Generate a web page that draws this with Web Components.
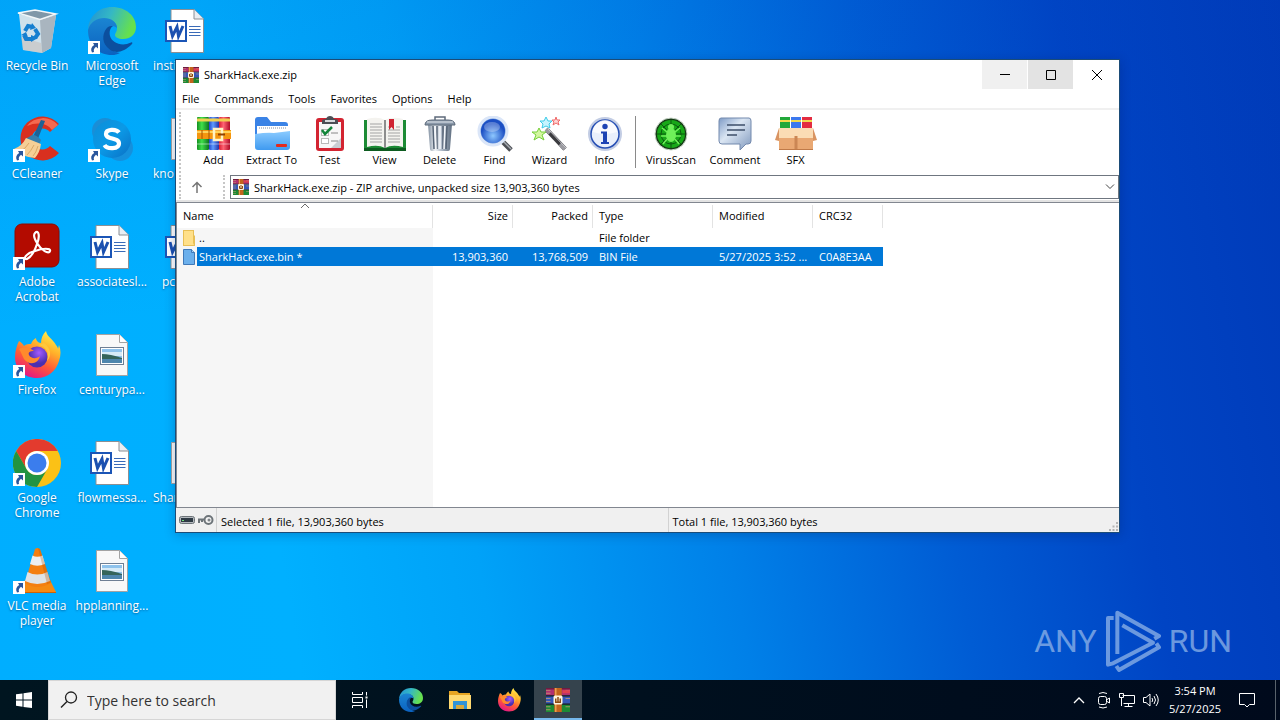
<!DOCTYPE html>
<html lang="en">
<head>
<meta charset="utf-8">
<title>Desktop</title>
<meta name="viewport" content="width=device-width, initial-scale=1">
<style>
html, body { margin: 0; height: 100%; }
body { font-family: "Open Sans", "Noto Sans", sans-serif; font-size: 11px; line-height: 15px; color: #000; overflow: hidden; }
</style>
</head>
<body>
<desktop-shell>
  <desktop-item icon="recycle">Recycle Bin</desktop-item>
  <desktop-item icon="ccleaner" shortcut>CCleaner</desktop-item>
  <desktop-item icon="acrobat" shortcut>Adobe Acrobat</desktop-item>
  <desktop-item icon="firefox" shortcut>Firefox</desktop-item>
  <desktop-item icon="chrome" shortcut>Google Chrome</desktop-item>
  <desktop-item icon="vlc" shortcut>VLC media player</desktop-item>
  <desktop-item icon="edge" shortcut>Microsoft Edge</desktop-item>
  <desktop-item icon="skype" shortcut>Skype</desktop-item>
  <desktop-item icon="word">associatesl...</desktop-item>
  <desktop-item icon="picture">centurypa...</desktop-item>
  <desktop-item icon="word">flowmessa...</desktop-item>
  <desktop-item icon="picture">hpplanning...</desktop-item>
  <desktop-item icon="word" clipped>insti</desktop-item>
  <desktop-item icon="file" clipped>kno</desktop-item>
  <desktop-item icon="word" clipped="short">pc</desktop-item>
  <desktop-item icon="file" clipped style="grid-row:5">Shar</desktop-item>

  <archive-window slot="window" heading="SharkHack.exe.zip">
    <menu-bar slot="menu"></menu-bar>
    <tool-bar slot="tools">
      <tool-button icon="add">Add</tool-button>
      <tool-button icon="extract" style="--w:61px">Extract To</tool-button>
      <tool-button icon="test">Test</tool-button>
      <tool-button icon="view">View</tool-button>
      <tool-button icon="delete">Delete</tool-button>
      <tool-button icon="find">Find</tool-button>
      <tool-button icon="wizard">Wizard</tool-button>
      <tool-button icon="info">Info</tool-button>
      <tool-separator></tool-separator>
      <tool-button icon="virus" style="--w:62px">VirusScan</tool-button>
      <tool-button icon="comment" style="--w:66px">Comment</tool-button>
      <tool-button icon="sfx">SFX</tool-button>
    </tool-bar>
    <address-bar slot="address"></address-bar>
    <file-list slot="files"></file-list>
    <status-bar slot="status"></status-bar>
  </archive-window>
  <water-mark slot="mark"></water-mark>
  <task-bar slot="taskbar"></task-bar>
</desktop-shell>

<script>
const PAGE = 'M8 2.5H31L40.5 12V45.5H8Z';
const BOOKS = `<rect x="0" y="0" width="16" height="5" fill="#b03070"/><rect y="5.500" width="16" height="5" fill="#3558b8"/><rect y="11" width="16" height="5" fill="#1c8a34"/>
<path d="M0 1.500H3M0 3.500H3M13 1.500H16M0 7H3M13 7H16M0 9H3M0 12.500H3M13 12.500H16M0 14.500H3" stroke="#c9a070" stroke-width=".5"/>
<path d="M0 5.200H16M0 10.700H16" stroke="#16202e" stroke-width=".8"/><path d="M0 .5H16" stroke="#6e1c40"/><path d="M11 2.500H16" stroke="#e04050" stroke-width="2"/>
<rect x="5.500" width="5" height="16" fill="#c4641c"/><path d="M6.500 0V16" stroke="#eba052"/><rect x="5" y="5" width="6" height="6" rx="1" fill="#fff4dc"/><path d="M6.500 7V9.500H9.500V7M8 6V9" stroke="#8c4a10" fill="none"/>`;
const EDGE = `<defs><linearGradient id="e1" x1="0" y1="0" x2="1" y2=".3"><stop offset="0" stop-color="#1f8fd6"/><stop offset=".5" stop-color="#35b8c4"/><stop offset="1" stop-color="#66e04e"/></linearGradient>
<linearGradient id="e2" x1="0" y1="0" x2="0" y2="1"><stop offset="0" stop-color="#1b85d2"/><stop offset="1" stop-color="#0b62c0"/></linearGradient></defs>
<path d="M0 22C1 9 11 0 24 0C38 0 48 9 48 20C48 28 42 32 35 32C30 32 27 30 27 28C27 26 29 25 29 21C29 15 23 12 16 12C9 12 3 16 0 22Z" fill="url(#e1)"/>
<path d="M0 23C2 15 9 11 16 11C23 11 29 15 29 21C25 17 17 20 17 29C17 38 24 45 32 46C29 47.500 27 48 24 48C10 48 0 38 0 23Z" fill="url(#e2)"/>
<path d="M20 20C15 24 13 34 19 40C25 47 34 47 44 37C45 36 44 35 43 35.500C34 40 24 36 22 29C21 25 22 21 25 19C23 18.800 21.500 19 20 20Z" fill="#0c4f9e"/>`;
const FOX = `<defs><linearGradient id="f1" x1=".8" y1="0" x2=".3" y2="1"><stop offset="0" stop-color="#fff44f"/><stop offset=".35" stop-color="#ffb12a"/><stop offset=".65" stop-color="#ff5a36"/><stop offset="1" stop-color="#e31587"/></linearGradient>
<radialGradient id="f2" cx=".6" cy=".3"><stop offset="0" stop-color="#a45cff"/><stop offset="1" stop-color="#4a2fb0"/></radialGradient></defs>
<path d="M6 10C8 11 10 13 11 15C13 13 16 13 18 13C19 10 21 8 23 7C23 9 25 12 28 12C28 7 30 3 33 0C34 6 40 8 43 14C44 15 45 17 45 18L46 14C48 19 48 24 46 30C43 40 35 47 24 47C11 47 2 38 2 26C2 20 4 14 6 10Z" fill="url(#f1)"/>
<circle cx="24" cy="26" r="10.500" fill="url(#f2)"/><path d="M6 18C12 15 17 17 21 20C17 20 15 21 16 24C18 28 24 28 27 25C25 34 15 34 11 28C9 24 8 21 6 18Z" fill="#ff8a2c"/>
<path d="M25 14C33 15 37 22 34 30C39 25 38 17 31 12Z" fill="#ffc83c"/>`;
const ICONS = {
recycle: ['0 0 48 48', `<path d="M6 7L10 43L29 46L38 41L43 8L27 12Z" fill="#dfe5ea" fill-opacity=".93"/><path d="M27 13L29 46L38 41L43 8Z" fill="#a9b5bf"/><path d="M5 6L22 3L43 7L27 12.500Z" fill="#7f97a8" stroke="#f2f6f8" stroke-width="1.500"/><path d="M8 30L10 43L29 46L28 36Z" fill="#c4b6ae" opacity=".45"/>
<g fill="none" stroke="#157fd0" stroke-width="4"><path d="M12 24L15 19L20 20"/><path d="M22 22L25 27L22 31"/><path d="M18 32H13L11 28"/></g><path d="M19 16L23 21L17 23ZM25 31L18 35V28ZM8 28L13 25L15 30Z" fill="#157fd0"/>`],
ccleaner: ['0 0 48 48', `<path d="M46 9A22 22 0 1 0 46 38L37 31A10.500 10.500 0 1 1 37 17Z" fill="#d9301f"/><path d="M45 10A20 20 0 0 0 14 11C25 6 35 9 39 15Z" fill="#f46a50"/><path d="M28 5L32 6L24 26L19 24Z" fill="#1d6296"/><path d="M16 22Q21 17 28 25L26 30L12 24Z" fill="#347fae"/><path d="M13 23L28 29Q27 37 22 43Q8 42 1 34Q9 31 13 23Z" fill="#f6cf96"/><path d="M16 28Q12 34 8 36M21 30Q18 36 14 40M25 31Q23 38 20 41" stroke="#dba865" fill="none"/>`],
acrobat: ['0 0 48 48', `<rect x="2" y="1" width="44" height="43" rx="7" fill="#b30b00" stroke="#8e0900"/><path d="M22 10C26 6 27 14 24 21C22 27 18 34 14 36C9 37 13 30 22 28C30 25 38 25 37 28C36 32 28 27 24 20C21 15 20 12 22 10Z" fill="none" stroke="#fff" stroke-width="2.200"/>`],
firefox: ['0 0 48 48', FOX],
edge: ['0 0 48 48', EDGE],
chrome: ['0 0 48 48', `<circle cx="24" cy="24" r="24" fill="#fbc116"/><path d="M3.200 12A24 24 0 0 1 44.800 12H24A12 12 0 0 0 13.600 30Z" fill="#e33b2e"/><path d="M3.200 12A24 24 0 0 0 24 48L34.400 30A12 12 0 0 1 13.600 30Z" fill="#229342"/><circle cx="24" cy="24" r="12" fill="#fff"/><circle cx="24" cy="24" r="9.500" fill="#3b7ded"/>`],
vlc: ['0 0 48 48', `<path d="M12 33H37L43 45H6Z" fill="#f58a12"/><path d="M6 45H43V46H6Z" fill="#cf6203"/><path d="M22 2Q24.500 0 27 2L38 36Q24 44 12 36Z" fill="#f47f10"/><path d="M19.500 8.500Q24 11 29.500 8.500L32 17Q24 20.500 17 17Z" fill="#eceff1"/><path d="M14.500 25Q24 30 34.500 25L37 34Q24 40 12 34Z" fill="#dfe3e6"/><path d="M25 1L34 37Q38 36 38 35L27 2Z" fill="#b45208" opacity=".3"/>`],
skype: ['0 0 48 48', `<defs><linearGradient id="s" x1="0" y1="0" x2="1" y2="1"><stop offset="0" stop-color="#0d8ed8"/><stop offset=".5" stop-color="#0b99e6"/><stop offset="1" stop-color="#0a6fc4"/></linearGradient></defs><circle cx="17" cy="16" r="13" fill="#1a8ed6"/><circle cx="32" cy="33" r="13" fill="#1590dc"/><circle cx="24" cy="24" r="19" fill="url(#s)"/><path d="M31 17.500C28 13.500 18 14 18 19C18 25 31 22 31 28.500C31 34.500 19 34.500 16.500 30" fill="none" stroke="#fff" stroke-width="4.200"/>`],
word: ['0 0 48 48', `<path d="${PAGE}" fill="#fff" stroke="#8b8f94"/><path d="M31 2.500V12H40.500" fill="#e9edf2" stroke="#8b8f94"/><path d="M26 19.500H37.500M26 22.500H37.500M26 25.500H37.500M26 28.500H37.500" stroke="#3a6bb8"/><rect x="3" y="14" width="20" height="20" fill="#fff" stroke="#1b55b6" stroke-width="2"/><path d="M7 19L9.500 29L14 20L15.500 29L20 19" fill="none" stroke="#1b50b0" stroke-width="3"/>`],
picture: ['0 0 48 48', `<path d="M8.500 3.500H31.500L39.500 11.500V44.500H8.500Z" fill="#f8f8f8" stroke="#a3a3a3"/><path d="M31.500 3.500V11.500H39.500" fill="#fff" stroke="#a3a3a3"/><rect x="12.500" y="16.500" width="23" height="17" fill="#fff" stroke="#6f7f94"/><rect x="14" y="18" width="20" height="14" fill="#8fc3ec"/><path d="M14 21H34V25H14Z" fill="#d7ebf7"/><path d="M14 23Q22 23 34 27V28H14Z" fill="#35645a"/><path d="M14 28H34V32H14Z" fill="#4e86ad"/>`],
file: ['0 0 48 48', `<path d="M8.500 3.500H31.500L39.500 11.500V44.500H8.500Z" fill="#f8f8f8" stroke="#a3a3a3"/>`],
add: ['0 0 44 36', `<defs><linearGradient id="g" x1="0" x2="1"><stop offset="0" stop-color="#148f22"/><stop offset=".4" stop-color="#3fe04a"/><stop offset="1" stop-color="#0c7320"/></linearGradient><linearGradient id="b" x1="0" x2="1"><stop offset="0" stop-color="#2445c8"/><stop offset=".4" stop-color="#5f9cff"/><stop offset="1" stop-color="#2232a8"/></linearGradient><linearGradient id="r" x1="0" x2="1"><stop offset="0" stop-color="#d81c30"/><stop offset=".4" stop-color="#ff6474"/><stop offset="1" stop-color="#b00d28"/></linearGradient></defs>
<rect x="5" y="1" width="12" height="33" rx="1" fill="url(#g)"/><rect x="17" y="1" width="10" height="33" rx="1" fill="url(#b)"/><rect x="27" y="1" width="11" height="33" rx="1" fill="url(#r)"/><path d="M5 4H17M17 4H27M27 4H38" stroke="#f0d050" stroke-width="3"/><path d="M5 28H38" stroke="#fff" stroke-opacity=".5"/><rect x="5" y="14" width="34" height="9" fill="#f5960f"/><path d="M5 16H39" stroke="#ffd35a" stroke-width="2"/><path d="M10 14V23M17 14V23" stroke="#a85303"/><rect x="22" y="13" width="8" height="11" fill="none" stroke="#fff3c4" stroke-width="2.500"/><path d="M26 18.500H33" stroke="#8f4204" stroke-width="2"/>`],
extract: ['0 0 44 36', `<defs><linearGradient id="x" x1="0" y1="0" x2="0" y2="1"><stop offset="0" stop-color="#8bcbff"/><stop offset="1" stop-color="#3f9af0"/></linearGradient></defs><path d="M5 4Q5 1 8 1H17L21 6H35Q38 6 38 9V30H5Z" fill="#3a83e6"/><path d="M7 10H38V20H7Z" fill="#fff"/><path d="M9 12H37" stroke="#7f8fa5" stroke-dasharray="1 1"/><path d="M5 18Q18 16 24 17L40 15V31Q40 34 37 34H8Q5 34 5 31Z" fill="url(#x)"/><rect x="26" y="28" width="11" height="3" rx="1" fill="#e32a1e"/>`],
test: ['0 0 44 36', `<rect x="8" y="2" width="28" height="33" rx="3" fill="#d32431"/><path d="M11 6H33V32H11Z" fill="#f7f7f7"/><path d="M33 22V32H23Z" fill="#c9cdd2"/><path d="M14 5Q14 3 18 3Q19 0 22 0Q25 0 26 3Q30 3 30 5V8H14Z" fill="#4b4f55"/><path d="M17 5H27" stroke="#d6d9dc" stroke-width="2"/><rect x="13.500" y="13.500" width="7" height="6" fill="#fff" stroke="#b8b8b8"/><path d="M14 14L17 18L24 11" fill="none" stroke="#13853a" stroke-width="2.500"/><rect x="13.500" y="22.500" width="7" height="5" fill="#fff" stroke="#b8b8b8"/><path d="M23 17H30M23 25H30" stroke="#888"/>`],
view: ['0 0 44 36', `<path d="M1 4H43V34H1Z" fill="#1c8a34"/><path d="M1 32H43V35H1Z" fill="#0d5c20"/><path d="M4 3Q15 0 22 4Q29 0 40 3V31Q29 28 22 32Q15 28 4 31Z" fill="#f4f3ef"/><path d="M22 4V32" stroke="#8d8d8d" stroke-width="2"/><path d="M7 8H19M7 11H19M7 14H19M7 17H19M7 20H19M7 23H19M7 26H19M25 14H37M25 17H37M25 20H37M25 23H37M25 26H37M33 11H37M25 11H26" stroke="#a3a3a3"/><path d="M26 3H31V14L28.500 11L26 14Z" fill="#cf2231"/>`],
delete: ['0 0 44 36', `<defs><linearGradient id="d" x1="0" x2="1"><stop offset="0" stop-color="#7f8e9f"/><stop offset=".3" stop-color="#f2f5f8"/><stop offset=".6" stop-color="#a8b4c2"/><stop offset="1" stop-color="#5f6e80"/></linearGradient></defs><path d="M10 8H34L32 33Q32 35 30 35H14Q12 35 12 33Z" fill="url(#d)"/><path d="M15 10L16 33M19 10V33M25 10V33M29 10L28 33" stroke="#556375" stroke-width="1.500"/><path d="M17 10L18 33M22 10V33M27 10L26 33" stroke="#f3f6fa" stroke-width="1.500"/><path d="M7 9Q7 4 14 4H30Q37 4 37 9Z" fill="#8b99aa" stroke="#5d6a7a"/><path d="M17 4V1H27V4" fill="none" stroke="#5d6a7a" stroke-width="1.500"/><path d="M9 6H35" stroke="#e3e9ef"/>`],
find: ['0 0 44 36', `<defs><radialGradient id="q" cx=".5" cy=".7"><stop offset="0" stop-color="#8ec8ff"/><stop offset="1" stop-color="#1c4fc4"/></radialGradient></defs><path d="M28 24L38 34" stroke="#4c4f55" stroke-width="5"/><path d="M28 23L38 33" stroke="#a6abb2" stroke-width="1.500"/><circle cx="20" cy="15" r="14" fill="#6f9be0" stroke="#dbe6f8" stroke-width="3"/><circle cx="20" cy="15" r="12" fill="url(#q)"/><ellipse cx="19" cy="11" rx="8" ry="5" fill="#fff" opacity=".28"/>`],
wizard: ['0 0 44 36', `<path d="M19 14L37 33" stroke="#3b3b3f" stroke-width="4.500"/><path d="M18 13L22 17M32 28L37 33" stroke="#9b9ba1" stroke-width="4"/><path d="M20 13L38 32" stroke="#c9c9ce"/><path d="M18 1L20 5L24 5L21 8L22 12L18 10L14 12L15 8L12 5L16 5Z" fill="#c6f4ff" stroke="#3ccbe8"/><path d="M11 12L13 16L18 16L14 19L16 24L11 21L6 24L8 19L4 16L9 16Z" fill="#d3f7a0" stroke="#76cf3a"/><path d="M28 1L29 4H32L30 6L31 9L28 7L25 9L26 6L24 4H27Z" fill="#ffd6d6" stroke="#ef6a6a"/>`],
info: ['0 0 44 36', `<circle cx="22" cy="18" r="17" fill="#c3cde4"/><circle cx="22" cy="18" r="14" fill="#e9effb" stroke="#254eb4" stroke-width="1.500"/><path d="M10 16A12 12 0 0 1 34 16Q22 20 10 16Z" fill="#fff" opacity=".7"/><circle cx="22" cy="10.500" r="2.700" fill="#1d43b4"/><path d="M18 15.500H24V26H26V28H18V26H20V17.500H18Z" fill="#1d43b4"/>`],
virus: ['0 0 44 36', `<circle cx="22" cy="18" r="16" fill="#163a16" stroke="#c9d6c9"/><circle cx="22" cy="18" r="14" fill="#17a818"/><g fill="none" stroke="#0a5a0e"><circle cx="22" cy="18" r="10"/><path d="M8 18H36M22 4V32M12 8L32 28M32 8L12 28"/></g><ellipse cx="22" cy="19" rx="5" ry="7" fill="#6ff05a"/><circle cx="22" cy="11" r="3" fill="#6ff05a"/><path d="M13 12L18 16M31 12L26 16M12 20H32M14 28L18 23M30 28L26 23" stroke="#6ff05a" stroke-width="1.500"/>`],
comment: ['0 0 44 36', `<defs><linearGradient id="c" x1="0" y1="0" x2="1" y2="1"><stop offset="0" stop-color="#7e9bc6"/><stop offset=".4" stop-color="#dbe6f3"/><stop offset="1" stop-color="#7f98bd"/></linearGradient></defs><path d="M8 2H36Q38 2 38 5V25Q38 28 35 28H33L27 34V28H9Q6 28 6 25V5Q6 2 8 2Z" fill="url(#c)" stroke="#7389ad"/><path d="M14 9H32M14 14H32M14 19H24" stroke="#3e4f69" stroke-width="1.500"/>`],
sfx: ['0 0 44 36', `<rect x="6" y="1" width="10" height="14" fill="#22a83a"/><rect x="17" y="1" width="10" height="14" fill="#3c78ee"/><rect x="28" y="1" width="10" height="14" fill="#e32c40"/><path d="M6 5H16M17 5H27M28 5H38" stroke="#f2d94c" stroke-width="2"/><path d="M5 12H39V34H5Z" fill="#e9a873"/><path d="M5 12H39V22H5Z" fill="#fbdcb4"/><path d="M5 12L1 24L5 25ZM39 12L43 24L39 25Z" fill="#d99462"/><path d="M22 20V34" stroke="#cb8654" stroke-width="3"/><path d="M5 33.500H39" stroke="#c07a48"/>`],
books: ['0 0 16 16', BOOKS],
folder: ['0 0 12 17', `<path d="M0 1H11V6L12 7V17H0Z" fill="#e8bf56"/><path d="M1 2H10V14L11 16H1Z" fill="#ffe08a"/>`],
bin: ['0 0 12 17', `<path d="M.500 1.500H8.500L11.500 4.500V16.500H.500Z" fill="#6cb0ec" stroke="#4079b8"/><path d="M8.500 1.500V4.500H11.500" fill="#a9d3f6" stroke="#4079b8"/>`],
explorer: ['0 0 24 24', `<path d="M1 3H9L11 5H22V21H1Z" fill="#e7a522"/><path d="M1 7H23V21H1Z" fill="#ffd970"/><path d="M5 13H19V21H16V17H8V21H5Z" fill="#2f93d8"/><path d="M8 17H16V21H8Z" fill="#d6a83d"/>`],
min: ['0 0 10 10', `<path d="M0 4.500H10" stroke="#000"/>`],
max: ['0 0 10 10', `<path d="M.500 .500H9.500V9.500H.500Z" fill="none" stroke="#000"/>`],
close: ['0 0 10 10', `<path d="M0 0L10 10M10 0L0 10" stroke="#000"/>`],
up: ['0 0 12 12', `<path d="M6 12V2M1.500 6L6 1.500L10.500 6" fill="none" stroke="#757575" stroke-width="1.500"/>`],
down: ['0 0 10 6', `<path d="M1 .500L5 4.500L9 .500" fill="none" stroke="#444"/>`],
sort: ['0 0 10 6', `<path d="M1 5L5 1L9 5" fill="none" stroke="#6a6a6a"/>`],
disk: ['0 0 16 8', `<rect x=".500" y=".500" width="15" height="7" rx="2" fill="#b5babf" stroke="#6d7479"/><rect x="2" y="2" width="12" height="4" fill="#2f3a44"/><path d="M3 4.500H5" stroke="#6fe07a"/>`],
key: ['0 0 17 12', `<path d="M1 5.500H9M2 6V9M5 6V8" stroke="#6d7479" stroke-width="2"/><circle cx="11.500" cy="6" r="4" fill="#f3f3f3" stroke="#6d7479" stroke-width="2"/><circle cx="12" cy="6" r="1.500" fill="#7e8489"/>`],
grip: ['0 0 9 9', `<path d="M7 0H9V2H7ZM3.500 3.500H5.500V5.500H3.500ZM7 3.500H9V5.500H7ZM0 7H2V9H0ZM3.500 7H5.500V9H3.500ZM7 7H9V9H7Z" fill="#b4b4b4"/>`],
start: ['0 0 16 16', `<path d="M0 2.300L6.500 1.400V7.600H0ZM7.500 1.200L16 0V7.600H7.500ZM0 8.500H6.500V14.700L0 13.800ZM7.500 8.500H16V16L7.500 14.900Z" fill="#fff"/>`],
search: ['0 0 18 18', `<circle cx="11" cy="6.500" r="5.500" fill="none" stroke="#222" stroke-width="1.300"/><path d="M7 10.500L1 16.500" stroke="#222" stroke-width="1.500"/>`],
tasks: ['0 0 18 16', `<path d="M1.500 0V2.500H11.500V0M1.500 16V13.500H11.500V16M1.500 5.500H11.500V10.500H1.500Z" fill="none" stroke="#fff"/><path d="M15.500 0V16" stroke="#fff"/><rect x="14" y="4" width="3" height="3" fill="#fff" stroke="#00141e"/>`],
chevron: ['0 0 12 7', `<path d="M1 6L6 1L11 6" fill="none" stroke="#fff" stroke-width="1.300"/>`],
camera: ['0 0 16 18', `<rect x="3.500" y="5.500" width="8" height="8" rx="2" fill="none" stroke="#fff"/><path d="M12 8.500L14.500 7V12L12 10.500M4 2.500Q8 .5 12 2.500M4 16Q8 18 12 16" fill="none" stroke="#fff"/>`],
network: ['0 0 18 16', `<path d="M4.500 3.500H16.500V11.500H5.500M10.500 12V14.500M6.500 14.500H14.500M1.500 1.500H5.500V5.500H1.500ZM3.500 6V14" fill="none" stroke="#fff"/>`],
sound: ['0 0 18 16', `<path d="M1.500 5.500H4L8 2V14L4 10.500H1.500ZM10 6Q11.500 8 10 10M12 4Q15 8 12 12M14 2Q18.500 8 14 14" fill="none" stroke="#fff"/>`],
notice: ['0 0 16 16', `<path d="M.500 1.500H15.500V12.500H10.500L8 15L5.500 12.500H.500Z" fill="none" stroke="#fff"/>`]
};
const tpl = html => { const t = document.createElement('template'); t.innerHTML = html; return t; };
const define = (name, html, setup) => {
  const t = tpl(html);
  customElements.define(name, class extends HTMLElement {
    constructor() { super(); this.attachShadow({ mode: 'open' }).append(t.content.cloneNode(true)); }
    connectedCallback() { if (setup && !this.ready) { this.ready = true; setup(this, this.shadowRoot); } }
  });
};

const iconTemplate = tpl(`<style>:host{display:block;flex:none;width:16px;height:16px}svg{display:block;width:100%;height:100%}</style><svg aria-hidden="true"></svg>`);
customElements.define('ui-icon', class extends HTMLElement {
  static observedAttributes = ['name'];
  constructor() { super(); this.attachShadow({ mode: 'open' }).append(iconTemplate.content.cloneNode(true)); }
  attributeChangedCallback(attr, old, value) {
    const icon = ICONS[value];
    if (!icon) return;
    const svg = this.shadowRoot.querySelector('svg');
    svg.setAttribute('viewBox', icon[0]);
    svg.innerHTML = icon[1];
  }
});

define('desktop-shell', `<style>
:host{display:grid;grid-template-rows:1fr auto;min-height:100vh;background:
 linear-gradient(175deg,rgba(0,70,190,.10),rgba(0,120,255,0) 40%),
 linear-gradient(80deg,#00aeff 0%,#00b0ff 22%,#00a2f8 36%,#0080e8 54%,#005cd4 70%,#0044c4 84%,#003ab8 100%)}
main{position:relative;overflow:hidden}
.icons{display:grid;grid-auto-flow:column;grid-template-rows:repeat(6,108px);grid-auto-columns:74px;column-gap:1px}
::slotted([slot=window]){position:absolute;left:175px;right:160px;top:59px}
::slotted([slot=mark]){position:absolute;right:48px;bottom:8px}
</style><main><div class="icons"><slot></slot></div><slot name="mark"></slot><slot name="window"></slot></main><slot name="taskbar"></slot>`);

define('desktop-item', `<style>
:host{display:flex;flex-direction:column;align-items:center;padding-top:7px;color:#fff;font-size:12px;text-align:center;text-shadow:0 1px 2px rgba(0,40,90,.55)}
.pic{position:relative}
.pic ui-icon{width:48px;height:48px}
.arrow{display:none;position:absolute;left:0;bottom:1px;width:12px;height:13px}
:host([shortcut]) .arrow{display:block}
p{margin:3px 0 0;width:74px}
:host([clipped]) p{width:100%;text-align:left;box-sizing:border-box;padding-left:3px}
:host([clipped=short]) p{padding-left:12px}
</style><div class="pic"><ui-icon></ui-icon><svg class="arrow" viewBox="0 0 12 13"><rect width="12" height="13" fill="#fff"/><path d="M5 2H10V7.500L8 5.800Q5 8 6 11L4 11.500Q1.500 7 6.200 4Z" fill="#2a569c"/></svg></div><p><slot></slot></p>`,
(el, root) => root.querySelector('ui-icon').setAttribute('name', el.getAttribute('icon')));

define('archive-window', `<style>
:host{display:flex;flex-direction:column;box-sizing:border-box;border:1px solid #1b4c78;background:#fff;box-shadow:0 2px 10px rgba(0,20,70,.25)}
header{display:flex;align-items:center;height:29px;padding-left:7px}
h1{flex:1;margin:0 0 0 5px;font-size:11px;font-weight:400}
nav{display:flex;align-self:flex-start;gap:1px}
button{display:grid;place-items:center;width:45px;height:29px;padding:0;border:0;background:#fff}
button.a{background:#f0f0f0}button.b{background:#e3e3e3}
nav ui-icon{width:10px;height:10px}
</style><header><ui-icon name="books"></ui-icon><h1></h1><nav><button class="a" aria-label="Minimize"><ui-icon name="min"></ui-icon></button><button class="b" aria-label="Maximize"><ui-icon name="max"></ui-icon></button><button aria-label="Close"><ui-icon name="close"></ui-icon></button></nav></header>
<slot name="menu"></slot><slot name="tools"></slot><slot name="address"></slot><slot name="files"></slot><slot name="status"></slot>`,
(el, root) => root.querySelector('h1').textContent = el.getAttribute('heading'));

define('menu-bar', `<style>
:host{display:flex;gap:15px;height:19px;padding-left:6px;border-bottom:2px solid #f0f0f0}
button{padding:0;border:0;background:none;font:inherit;line-height:20px}
</style>${['File','Commands','Tools','Favorites','Options','Help'].map(x => `<button>${x}</button>`).join('')}`);

define('tool-bar', `<style>
:host{display:flex;padding:6px 0 5px}
i{width:0;margin:-4px 5px -5px 3px;border-left:2px dotted #c6c6c6}
</style><i></i><slot></slot>`);
define('tool-button', `<style>
:host{display:block;width:var(--w,55px)}
button{display:flex;flex-direction:column;align-items:center;width:100%;padding:0;border:0;background:none;font:inherit;line-height:16px;white-space:nowrap}
ui-icon{width:44px;height:36px}
</style><button><ui-icon></ui-icon><span><slot></slot></span></button>`,
(el, root) => root.querySelector('ui-icon').setAttribute('name', el.getAttribute('icon')));
define('tool-separator', `<style>:host{display:block;width:1px;margin:0 4px 0 3px;background:#8a8a8a}</style>`);

define('address-bar', `<style>
:host{display:flex;height:29px;padding:2px 0 1px;box-sizing:border-box;border-bottom:2px solid #e3e3e3}
i{width:0;margin-left:3px;border-left:2px dotted #c6c6c6}
button{display:grid;place-items:center;width:32px;margin-right:7px;padding:0;border:0;background:none}
button ui-icon{width:12px;height:12px}
label{position:relative;display:flex;align-items:center;flex:1;margin-left:5px;height:24px;box-sizing:border-box;border:1px solid #6f7680;padding:0 3px 0 2px}
select{flex:1;appearance:none;border:0;padding:0 0 0 5px;background:none;font:inherit;color:#000;outline:0}
.d{width:10px;height:6px}
</style><i></i><button aria-label="Up one level"><ui-icon name="up"></ui-icon></button><i></i>
<label aria-label="Archive path"><ui-icon name="books"></ui-icon><select><option>SharkHack.exe.zip - ZIP archive, unpacked size 13,903,360 bytes</option></select><ui-icon class="d" name="down"></ui-icon></label>`);

define('file-list', `<style>
:host{display:block;overflow:hidden;min-height:304px;border:1px solid #828790;border-right:0;background:linear-gradient(#f6f6f6,#f6f6f6) 0 0/256px 100% no-repeat #fff}
table{border-collapse:collapse;table-layout:fixed;width:706px;background:#fff}
th,td{padding:0 5px 0 6px;font-weight:400;text-align:left;white-space:nowrap;overflow:hidden}
th{position:relative;height:25px;background:linear-gradient(#e3e3e3,#e3e3e3) 100% 2px/1px 100% no-repeat #fff}
td{height:19px}
td:first-child{padding:0 0 0 6px;background:#f6f6f6}
.n{text-align:right}
.name{display:flex;height:19px;line-height:19px}
.name ui-icon{width:12px;height:17px;margin:1px 2px 0 0}
.name span{flex:1;padding-left:2px}
.sel td:not(:first-child),.sel .name span{background:#0078d7;color:#fff}
.s{position:absolute;left:123px;top:0;width:10px;height:6px}
</style><table><colgroup><col style="width:256px"><col style="width:80px"><col style="width:80px"><col style="width:120px"><col style="width:100px"><col style="width:70px"></colgroup>
<thead><tr><th>Name<ui-icon class="s" name="sort"></ui-icon></th><th class="n">Size</th><th class="n">Packed</th><th>Type</th><th>Modified</th><th>CRC32</th></tr></thead>
<tbody><tr><td><div class="name"><ui-icon name="folder"></ui-icon><span>..</span></div></td><td></td><td></td><td>File folder</td><td></td><td></td></tr>
<tr class="sel"><td><div class="name"><ui-icon name="bin"></ui-icon><span>SharkHack.exe.bin *</span></div></td><td class="n">13,903,360</td><td class="n">13,768,509</td><td>BIN File</td><td>5/27/2025 3:52 ...</td><td>C0A8E3AA</td></tr></tbody></table>`);

define('status-bar', `<style>
:host{position:relative;display:flex;height:24px;background:#f0f0f0}
.i{display:flex;align-items:center;gap:2px;width:40px;box-sizing:border-box;padding-left:3px}
.disk{height:8px}.key{width:17px;height:12px}
p{flex:1;margin:0;padding-left:4px;border-left:1px solid #d2d2d2;line-height:27px}
.g{position:absolute;right:1px;bottom:1px;width:9px;height:9px}
</style><div class="i"><ui-icon class="disk" name="disk"></ui-icon><ui-icon class="key" name="key"></ui-icon></div><p>Selected 1 file, 13,903,360 bytes</p><p>Total 1 file, 13,903,360 bytes</p><ui-icon class="g" name="grip"></ui-icon>`);

define('water-mark', `<style>
:host{display:flex;align-items:center;gap:8px;color:#8fb4e8;opacity:.75;font-family:"Roboto",sans-serif;font-size:32px;line-height:62px}
svg{width:56px;height:62px}
</style><span>ANY</span><svg viewBox="238 28 168 186" aria-hidden="true"><g fill="none" stroke="#8fb4e8" stroke-width="12" stroke-linejoin="round"><path d="M264 52H247V192L262 188L382 126L290 74"/><path d="M275 160V36L400 106L386 114"/><path d="M272 196L280 208L400 140L392 128"/></g></svg><span>RUN</span>`);

define('task-bar', `<style>
:host{display:flex;height:40px;background:linear-gradient(90deg,#001520,#00101e 50%,#000a1c);color:#fff}
button{display:grid;place-items:center;width:48px;height:40px;padding:0;border:0;background:none;color:inherit;font:inherit}
label{display:flex;align-items:center;width:288px;box-sizing:border-box;border:1px solid #d6d6d6;background:#f1f1f1;padding-left:11px}
label ui-icon{width:18px;height:18px}
input{flex:1;min-width:0;border:0;outline:0;padding:0 0 0 9px;background:none;font:14px "Open Sans",sans-serif}
input::placeholder{color:#333;opacity:1}
.apps{display:flex;gap:1px;flex:1}
.apps button:first-child{margin-right:2px}
.t{width:18px;height:16px}.m{width:24px;height:24px}
.on{background:#35434d;box-shadow:inset 0 -2px #76b9ed}
.tray{display:flex;margin-right:4px}
.tray button{width:24px}
.tray button ui-icon{width:18px;height:16px}
.tray button .c{width:12px;height:7px}
.tray button .v{width:16px;height:18px}
.tray .clock{width:56px;margin-left:4px;align-content:center;line-height:18px}
.tray .n{width:48px}
.tray .n ui-icon{width:16px}
.show{width:4px;border-left:1px solid #59636c}
</style><button aria-label="Start"><ui-icon name="start"></ui-icon></button>
<label aria-label="Search"><ui-icon name="search"></ui-icon><input type="text" placeholder="Type here to search"></label>
<div class="apps"><button aria-label="Task view"><ui-icon class="t" name="tasks"></ui-icon></button><button aria-label="Edge"><ui-icon class="m" name="edge"></ui-icon></button><button aria-label="File Explorer"><ui-icon class="m" name="explorer"></ui-icon></button><button aria-label="Firefox"><ui-icon class="m" name="firefox"></ui-icon></button><button class="on" aria-label="WinRAR"><ui-icon class="m" name="books"></ui-icon></button></div>
<div class="tray"><button aria-label="Hidden icons"><ui-icon class="c" name="chevron"></ui-icon></button><button aria-label="Camera"><ui-icon class="v" name="camera"></ui-icon></button><button aria-label="Network"><ui-icon name="network"></ui-icon></button><button aria-label="Volume"><ui-icon name="sound"></ui-icon></button><button class="clock"><span>3:54 PM</span><span>5/27/2025</span></button><button class="n" aria-label="Notifications"><ui-icon name="notice"></ui-icon></button></div><div class="show"></div>`);
</script>
</body>
</html>
